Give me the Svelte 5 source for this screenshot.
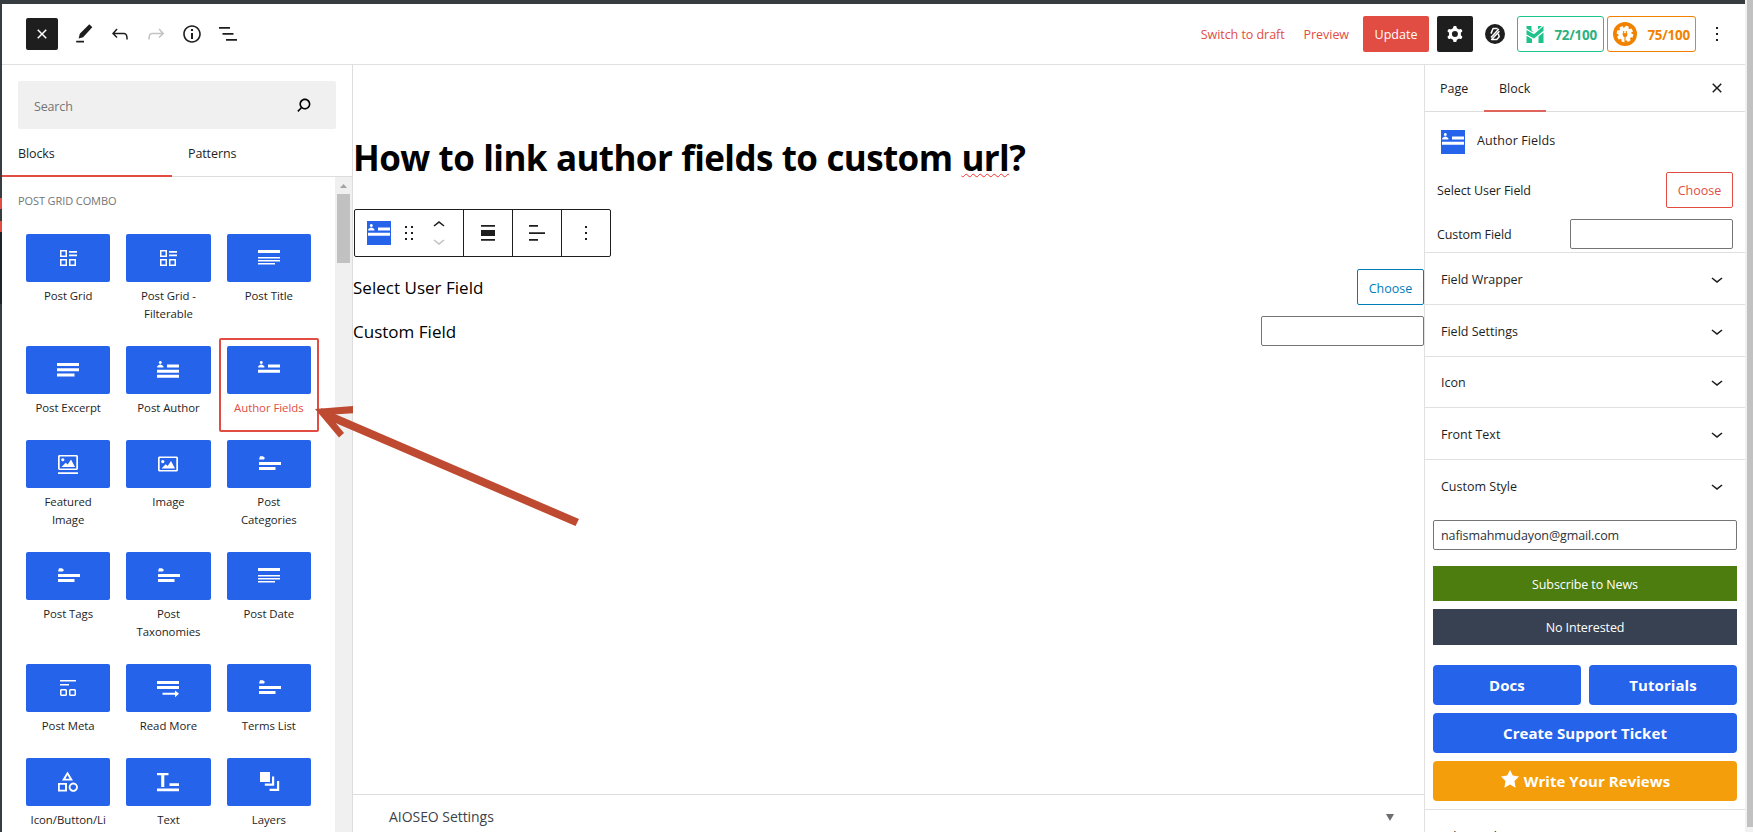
<script>
  const blocks = [
    ['Post Grid', 'grid'], ['Post Grid - Filterable', 'grid'], ['Post Title', 'title'],
    ['Post Excerpt', 'excerpt'], ['Post Author', 'author'], ['Author Fields', 'fields'],
    ['Featured Image', 'featured'], ['Image', 'image'], ['Post Categories', 'terms'],
    ['Post Tags', 'terms'], ['Post Taxonomies', 'terms'], ['Post Date', 'title'],
    ['Post Meta', 'meta'], ['Read More', 'more'], ['Terms List', 'terms'],
    ['Icon/Button/Li', 'shapes'], ['Text', 'text'], ['Layers', 'layers']
  ];
  const selected = 'Author Fields';
  const panels = ['Field Wrapper', 'Field Settings', 'Icon', 'Front Text', 'Custom Style'];

  const avatar = 'M4.3 3a1.5 1.5 0 1 1-.01 0zM1.2 9.6V8.2q3.1-3.6 6.2 0v1.4z';
  const glyphs = {
    grid: 'M4 4h7v7H4zM5.5 5.5v4h4v-4zM4 13h7v7H4zM5.5 14.5v4h4v-4zM13 13h7v7h-7zM14.5 14.5v4h4v-4zM13 5h8v1.7h-8zM13 8.6h8v1.7h-8z',
    title: 'M1 4h22v3H1zM1 11h22v1.5H1zM1 14h22v1.5H1zM1 17h17v1.5H1z',
    excerpt: 'M1 5h22v3H1zM1 10.2h22v3H1zM1 15.4h17.5v3H1z',
    author: avatar + 'M11 6.5h12v3H11zM1 11.7h22v3H1zM1 16.8h22v3H1z',
    fields: avatar + 'M11 6.5h12v3H11zM1 11.7h22v3H1z',
    featured: 'M3 3h18l1 1v13l-1 1H3l-1-1V4zM3.7 4.6v11.8h16.6V4.6zM2 20.2h20v1.8H2zM6.8 6.2a1.6 1.6 0 1 1-.01 0zM5.5 15l4.2-4.2 2 1.8 3.3-5 4 7.4z',
    image: 'M3 4.5h18l1 1v13l-1 1H3l-1-1v-13zM3.7 6.1v11.8h16.6V6.1zM6.8 8a1.6 1.6 0 1 1-.01 0zM5.5 16.5l4.2-4.2 2 1.8 3.3-5 4 7.4z',
    terms: 'M2 7.5 3 4.2h3l2 1.8-1.2 1.5zM2 10h22v3H2zM2 15h16.5v3H2z',
    meta: 'M4 4h16v1.5H4zM4 8h9v1.5H4zM5 13h5l1 1v5l-1 1H5l-1-1v-5zM5.5 14.5v4h4v-4zM14 13h5l1 1v5l-1 1h-5l-1-1v-5zM14.5 14.5v4h4v-4z',
    more: 'M1 5h22v3H1zM1 10h22v3H1zM6.5 16.8h12.5v-2.4l4 3.4-4 3.4v-2.4H6.5z',
    shapes: 'M11.5 1.5 17 10.5H6zM11.5 5 9.4 8.7h4.2zM2 13h9v8.5H2zM3.8 14.8v5h5.2v-5zM17.3 12.6a4.6 4.6 0 1 1-.01 0zM17.3 14.4a2.8 2.8 0 1 0 .01 0z',
    text: 'M1 3h11.5v2.2H8.3V17H5.2V5.2H1zM13.5 13.2h9.5v2.8h-9.5zM1 18.5h22v2.8H1z',
    layers: 'M3 2h10v10H3zM15 6.5h2.2v9.2H7.8v-2.2H15zM20 11h2.2v10h-9.6v-2.2H20z'
  };

  const ui = {
    close: 'M12 13.06l3.712 3.713 1.061-1.06L13.061 12l3.712-3.712-1.06-1.06L12 10.938 8.288 7.227l-1.061 1.06L10.939 12l-3.712 3.712 1.06 1.061L12 13.061z',
    pencil: 'm20.3 5.2-3-3-9.5 9.6-1.2 4.6 4.5-1.2zM12 18.8H4.2v1.7H12z',
    undo: 'M18.3 11.7c-.6-.6-1.4-.9-2.3-.9H6.7l2.9-3.3-1.1-1-4.5 5L8.5 16l1-1-2.7-2.7H16c.5 0 .9.2 1.3.5 1 1 1 3.4 1 4.5v.3h1.5v-.2c0-1.5 0-4.3-1.5-5.7z',
    redo: 'M15.6 6.5l-1.1 1 2.9 3.3H8c-.9 0-1.7.3-2.3.9-1.4 1.5-1.4 4.2-1.4 5.6v.2h1.5v-.3c0-1.1 0-3.5 1-4.5.3-.3.7-.5 1.3-.5h9.2L14.5 15l1.1 1.1 4.6-4.6-4.6-5z',
    info: 'M12 3.2c-4.8 0-8.8 3.9-8.8 8.8 0 4.8 3.9 8.8 8.8 8.8 4.8 0 8.8-3.9 8.8-8.8 0-4.8-4-8.8-8.8-8.8zm0 16c-4 0-7.2-3.3-7.2-7.2C4.8 8 8 4.8 12 4.8s7.2 3.3 7.2 7.2c0 4-3.2 7.2-7.2 7.2zM11 17h2v-6h-2v6zm0-8h2V7h-2v2z',
    list: 'M3 5h11v1.7H3zM6.5 11h11v1.7h-11zM21 17H10v1.7h11z',
    search: 'M13 5c-3.3 0-6 2.7-6 6 0 1.4.5 2.7 1.3 3.7l-3.6 3.6 1.2 1.2 3.6-3.6c1 .8 2.3 1.1 3.5 1.1 3.3 0 6-2.7 6-6S16.3 5 13 5zm0 10.3c-2.4 0-4.3-1.9-4.3-4.3s1.9-4.3 4.3-4.3 4.3 1.9 4.3 4.3-1.9 4.3-4.3 4.3z',
    gear: 'M10.289 4.836A1 1 0 0111.275 4h1.306a1 1 0 01.987.836l.244 1.466c.787.26 1.503.679 2.108 1.218l1.393-.522a1 1 0 011.216.437l.653 1.13a1 1 0 01-.23 1.273l-1.148.944a6.025 6.025 0 010 2.435l1.149.946a1 1 0 01.23 1.272l-.653 1.13a1 1 0 01-1.216.437l-1.394-.522c-.605.54-1.32.958-2.108 1.218l-.244 1.466a1 1 0 01-.987.836h-1.306a1 1 0 01-.986-.836l-.244-1.466a5.995 5.995 0 01-2.108-1.218l-1.394.522a1 1 0 01-1.217-.436l-.653-1.131a1 1 0 01.23-1.272l1.149-.946a6.026 6.026 0 010-2.435l-1.148-.944a1 1 0 01-.23-1.272l.653-1.131a1 1 0 011.217-.437l1.393.522a5.994 5.994 0 012.108-1.218l.244-1.466zM14.929 12a3 3 0 11-6 0 3 3 0 016 0z',
    dots: 'M13 19h-2v-2h2v2zm0-6h-2v-2h2v2zm0-6h-2V5h2v2z',
    down: 'M17.5 11.6L12 16l-5.5-4.4.9-1.2L12 14l4.5-3.6 1 1.2z',
    up: 'M6.5 12.4L12 8l5.5 4.4-.9 1.2L12 10l-4.5 3.6-1-1.2z',
    drag: 'M8 5h2v2H8zM14 5h2v2h-2zM8 11h2v2H8zM14 11h2v2h-2zM8 17h2v2H8zM14 17h2v2h-2z',
    wide: 'M5 4h14v1.7H5zM5 9h14v6H5zM5 18h14v1.7H5z',
    left: 'M4 4h9v1.7H4zM4 11.2h16v1.7H4zM4 18h9v1.7H4z'
  };
</script>

{#snippet icon(d, size = 24)}
  <svg width={size} height={size} viewBox="0 0 24 24" fill="currentColor" fill-rule="evenodd"><path {d} /></svg>
{/snippet}

<div class="page">
  <div class="rail"><i class="flag one"></i><i class="flag two"></i><i class="current"></i></div>
  <div class="editor">
    <header>
      <div class="tools">
        <button class="toggle">{@render icon(ui.close)}</button>
        {@render icon(ui.pencil)}
        {@render icon(ui.undo)}
        <span class="faded">{@render icon(ui.redo)}</span>
        {@render icon(ui.info)}
        {@render icon(ui.list)}
      </div>
      <div class="actions">
        <a class="draft">Switch to draft</a>
        <a class="preview">Preview</a>
        <button class="update">Update</button>
        <button class="gear">{@render icon(ui.gear)}</button>
        <svg class="badge" width="20" height="20" viewBox="0 0 20 20">
          <circle cx="10" cy="10" r="10" fill="#1e1e1e" />
          <path d="M12.6 4.6H8L6 9.6M13.8 5 6 13.4M14.4 7.2 6.6 15.4h5.2l2.4-2.6-.9-3" fill="none" stroke="#fff" stroke-width="1.5" stroke-linejoin="round" />
        </svg>
        <div class="score green">
          <svg width="18" height="18" viewBox="0 0 18 18" fill="#1ec28b"><path d="M.5 1H5.5v4.2L8 7.4 5.5 6.6.5 3.5zM.5 5 8 9.2 17.5 1v4.8L8 13.6.5 9.4zM.5 10.8 6 14V18H.5zM12.5 11.4l5-4V18h-5zM12 1h4l-4 3.6z" /></svg>
          <span>72/100</span>
        </div>
        <div class="score orange">
          <svg width="24" height="24" viewBox="0 0 24 24">
            <circle cx="12" cy="12" r="12" fill="#f18200" />
            <circle cx="12" cy="12" r="6.8" fill="#fff" />
            <circle cx="12" cy="12" r="7.2" fill="none" stroke="#fff" stroke-width="2.2" stroke-dasharray="3.4 2.25" />
            <path d="M10.7 9v3M13.3 9v3M12 13v7" stroke="#f18200" stroke-width="1.1" />
            <path d="M9.6 11.2h4.8v1.9L13.2 15h-2.4l-1.2-1.9z" fill="#f18200" />
          </svg>
          <span>75/100</span>
        </div>
        <span class="menu">{@render icon(ui.dots)}</span>
      </div>
    </header>

    <div class="body">
      <aside class="inserter">
        <div class="search"><span>Search</span>{@render icon(ui.search, 22)}</div>
        <nav class="tabs"><span class="active">Blocks</span><span>Patterns</span></nav>
        <div class="scroller">
          <div class="list">
            <h2>POST GRID COMBO</h2>
            <div class="blocks">
              {#each blocks as [name, glyph]}
                <div class="block" class:selected={name === selected}>
                  <div class="tile">{@render icon(glyphs[glyph])}</div>
                  <span>{name}</span>
                </div>
              {/each}
            </div>
          </div>
          <div class="bar">
            <svg width="7" height="4" viewBox="0 0 7 4"><path d="M0 4 3.5 0 7 4z" fill="#a3a3a3" /></svg>
            <i></i>
          </div>
        </div>
      </aside>

      <main>
        <div class="canvas">
          <h1>How to link author fields to custom <span>url</span>?</h1>
          <div class="toolbar">
            <div class="group first">
              <span class="blockicon">{@render icon(glyphs.fields)}</span>
              {@render icon(ui.drag)}
              <div class="movers">{@render icon(ui.up)}<span class="faded">{@render icon(ui.down)}</span></div>
            </div>
            <div class="group">{@render icon(ui.wide)}</div>
            <div class="group">{@render icon(ui.left)}</div>
            <div class="group">{@render icon(ui.dots)}</div>
          </div>
          <div class="row choose"><span>Select User Field</span><button class="outline blue">Choose</button></div>
          <div class="row custom"><span>Custom Field</span><div class="field"></div></div>
        </div>
        <div class="metabox"><span>AIOSEO Settings</span><svg width="8" height="7" viewBox="0 0 8 7"><path d="M0 0h8L4 7z" fill="#6b6e72" /></svg></div>
      </main>

      <aside class="settings">
        <nav><span class="page-tab">Page</span><span class="block-tab">Block</span><i>{@render icon(ui.close)}</i></nav>
        <div class="card"><span class="blockicon">{@render icon(glyphs.fields)}</span><b>Author Fields</b></div>
        <div class="line pick"><span>Select User Field</span><button class="outline red">Choose</button></div>
        <div class="line"><span>Custom Field</span><div class="field"></div></div>
        <div class="panels">
          {#each panels as p}
            <div class="panel"><span>{p}</span>{@render icon(ui.down)}</div>
          {/each}
        </div>
        <div class="promo">
          <div class="email">nafismahmudayon@gmail.com</div>
          <div class="news">Subscribe to News</div>
          <div class="no">No Interested</div>
          <div class="links">
            <div class="link">Docs</div>
            <div class="link">Tutorials</div>
            <div class="link full">Create Support Ticket</div>
            <div class="link full review">
              <svg width="18" height="18" viewBox="0 0 18 18" fill="#fff"><path d="m9 0 2.8 5.6 6.2.9-4.5 4.4 1.1 6.8L9 14.6l-5.6 3.1 1.1-6.8L0 6.5l6.2-.9z" /></svg>
              <span>Write Your Reviews</span>
            </div>
          </div>
        </div>
        <div class="advanced">Advanced</div>
      </aside>
    </div>
    <svg class="arrow" width="275" height="130" viewBox="0 0 275 130" fill="#bf4a32">
      <path d="M2 9 40 6v7.2L16 14.8 31 33l-5 4.5z" />
      <path d="m8 8 258 111-3.5 7L12 18.5z" />
    </svg>
  </div>
  <div class="window-bar"><i></i></div>
</div>

<style>
  :global(body) { margin: 0; overflow: hidden; background: #fff; }
  .page, .page * { box-sizing: border-box; }
  .page {
    display: flex; width: 1753px; height: 832px; overflow: hidden;
    font: 12.5px/18px "Open Sans", "Noto Sans", sans-serif; letter-spacing: -0.15px; color: #1e1e1e;
  }
  button { font: inherit; letter-spacing: inherit; padding: 0; border: 0; }
  svg { display: block; flex: none; }
  i { font-style: normal; }
  .rail { width: 2px; background: #373c41; display: flex; flex-direction: column; padding-top: 198px; }
  .flag { height: 11px; background: #e14d43; }
  .flag.two { margin-top: 12px; }
  .current { height: 72px; background: #1d2327; }
  .editor { position: relative; width: 1743px; border-top: 4px solid #373c41; display: flex; flex-direction: column; }
  .window-bar { width: 8px; background: #f1f1f1; padding-left: 2px; }
  .window-bar i { display: block; height: 827px; background: #c1c1c1; }

  header { height: 61px; flex: none; border-bottom: 1px solid #e0e0e0; display: flex; justify-content: space-between; align-items: center; padding-left: 24px; }
  .tools { display: flex; align-items: center; gap: 12px; }
  .toggle { width: 32px; height: 32px; margin-right: 2px; background: #1e1e1e; color: #fff; border-radius: 2px; display: grid; place-items: center; }
  .faded { color: #c2c2c2; }
  .actions { display: flex; align-items: center; padding-right: 16px; }
  .draft, .preview { color: #e14d43; padding-top: 1px; letter-spacing: -0.05px; }
  .preview { margin: 0 14px 0 19px; }
  .update { width: 66px; height: 36px; padding-top: 1px; background: #e14d43; color: #fff; border-radius: 2px; letter-spacing: 0; }
  .gear { width: 36px; height: 36px; margin: 0 12px 0 8px; background: #1e1e1e; color: #fff; border-radius: 2px; display: grid; place-items: center; }
  .badge { margin-right: 12px; }
  .score { height: 36px; border: 1px solid; border-radius: 3px; display: flex; align-items: center; justify-content: space-between; font-weight: 700; font-size: 13.4px; letter-spacing: -0.2px; }
  .score span { padding-top: 1px; }
  .green { width: 87px; padding: 0 6px 0 8px; border-color: #1ec28b; color: #2bb17f; }
  .orange { width: 89px; margin: 0 9px 0 3px; padding: 0 5px; border-color: #f18200; color: #f18200; }

  .body { display: flex; flex: 1; min-height: 0; }
  .inserter { width: 351px; border-right: 1px solid #ddd; display: flex; flex-direction: column; min-height: 0; }
  .search { flex: none; height: 48px; margin: 16px 16px 0; padding: 4px 21px 0 16px; background: #f0f0f0; border-radius: 2px; display: flex; align-items: center; justify-content: space-between; color: #757575; }
  .search svg { color: #000; margin: -5px 0 0; }
  .tabs { flex: none; display: flex; height: 48px; border-bottom: 1px solid #ddd; }
  .tabs span { width: 170px; height: 48px; padding-left: 16px; line-height: 50px; font-weight: 500; letter-spacing: -0.1px; }
  .tabs .active { border-bottom: 2px solid #e14d43; }
  .scroller { display: flex; flex: 1; min-height: 0; overflow: hidden; }
  .list { width: 333px; padding: 15px 0 0 16px; }
  h2 { margin: 0 0 16px; font-size: 11px; line-height: 18px; font-weight: 500; letter-spacing: -0.1px; color: #757575; }
  .blocks { width: 301px; display: grid; grid-template-columns: repeat(3, 1fr); }
  .block { padding: 8px 8px 15px; display: flex; flex-direction: column; align-items: center; text-align: center; font-size: 11.4px; letter-spacing: -0.05px; }
  .block span { margin-top: 5px; width: 80px; line-height: 18px; }
  .tile { width: 100%; height: 48px; background: #2563eb; color: #fff; border-radius: 2px; display: grid; place-items: center; }
  .selected { color: #e14d43; box-shadow: inset 0 0 0 2px #e14d43; border-radius: 2px; }
  .bar { width: 17px; background: #f0f0f0; display: flex; flex-direction: column; align-items: center; padding-top: 7px; }
  .bar i { width: 13px; height: 69px; margin-top: 6px; background: #c1c1c1; }

  main { width: 1071px; display: flex; flex-direction: column; color: #000; }
  .canvas { flex: 1; padding-top: 69px; }
  h1 { margin: 0; height: 48px; line-height: 48px; font-size: 35px; font-weight: 700; letter-spacing: -0.6px; word-spacing: 0.5px; white-space: nowrap; }
  h1 span { text-decoration: underline wavy #f03030 1px; text-underline-offset: 2px; text-decoration-skip-ink: none; }
  .toolbar { display: flex; width: 257px; height: 48px; margin: 27px 0 0 1px; border: 1px solid #1e1e1e; border-radius: 2px; color: #1e1e1e; }
  .group { width: 49px; border-left: 1px solid #1e1e1e; display: grid; place-items: center; }
  .group.first { width: 108px; border-left: 0; padding-left: 12px; display: flex; align-items: center; gap: 6px; }
  .movers { display: flex; flex-direction: column; }
  .movers svg { margin: -4px 0; }
  .blockicon { width: 24px; height: 24px; background: #2563eb; color: #fff; }
  .row { display: flex; justify-content: space-between; align-items: center; font-size: 17px; letter-spacing: 0.02px; }
  .row > span { padding-top: 1px; }
  .choose { margin-top: 12px; height: 36px; }
  .custom { margin-top: 11px; height: 30px; }
  .outline { width: 67px; height: 36px; background: #fff; border: 1px solid; border-radius: 2px; font-size: 12.5px; letter-spacing: 0; }
  .blue { color: #007cba; padding-top: 3px; }
  .red { color: #e14d43; padding-top: 1px; }
  .field { width: 163px; height: 30px; border: 1px solid #757575; border-radius: 2px; }
  .metabox { height: 38px; border-top: 1px solid #ddd; padding: 7px 30px 0 36px; display: flex; align-items: center; justify-content: space-between; font-size: 14px; letter-spacing: -0.05px; color: #3c434a; }

  .settings { width: 321px; border-left: 1px solid #e0e0e0; display: flex; flex-direction: column; }
  .settings > * { flex: none; }
  .settings nav { height: 47px; border-bottom: 1px solid #ddd; display: flex; align-items: flex-start; line-height: 48px; font-weight: 500; letter-spacing: 0; }
  .page-tab { margin-left: 15px; width: 44px; }
  .block-tab { width: 62px; height: 47px; border-bottom: 2px solid #e0655d; padding-left: 15px; }
  nav i { margin: 11px 16px 0 auto; }
  .card { height: 60px; padding: 18px 0 0 16px; display: flex; gap: 12px; }
  .card b, .panel span { font-weight: 500; letter-spacing: 0; }
  .card b { line-height: 22px; letter-spacing: 0.1px; }
  .line { display: flex; height: 30px; justify-content: space-between; align-items: center; padding: 0 12px; letter-spacing: -0.1px; }
  .line > span { padding-top: 2px; }
  .line.pick { height: 36px; margin-bottom: 11px; }
  .panels { margin-top: 3px; }
  .panel { height: 51.75px; border-top: 1px solid #e0e0e0; padding: 3px 16px 0; display: flex; align-items: center; justify-content: space-between; }
  .panel svg { margin-top: -2px; }
  .promo { padding: 9px 8px 8px; text-align: center; }
  .email { height: 30px; border: 1px solid #757575; border-radius: 2px; padding-left: 7px; line-height: 29px; text-align: left; letter-spacing: -0.1px; color: #2c3338; }
  .news, .no { height: 36px; line-height: 37px; color: #fff; letter-spacing: -0.1px; }
  .news { height: 35px; margin: 16px 0 8px; background: #4d7c0f; }
  .no { background: #374151; }
  .links { margin-top: 20px; display: grid; grid-template-columns: 1fr 1fr; gap: 8px; }
  .link { height: 40px; line-height: 40px; border-radius: 4px; background: #2563eb; color: #fff; font-size: 15px; font-weight: 700; letter-spacing: 0.05px; }
  .full { grid-column: span 2; }
  .review { background: #f59e0b; display: flex; justify-content: center; gap: 5px; padding-left: 1px; }
  .review svg { margin-top: 9px; }
  .advanced { border-top: 1px solid #e0e0e0; padding: 18px 16px 0; font-weight: 500; }
  .arrow { position: absolute; left: 311px; top: 396px; }
</style>
